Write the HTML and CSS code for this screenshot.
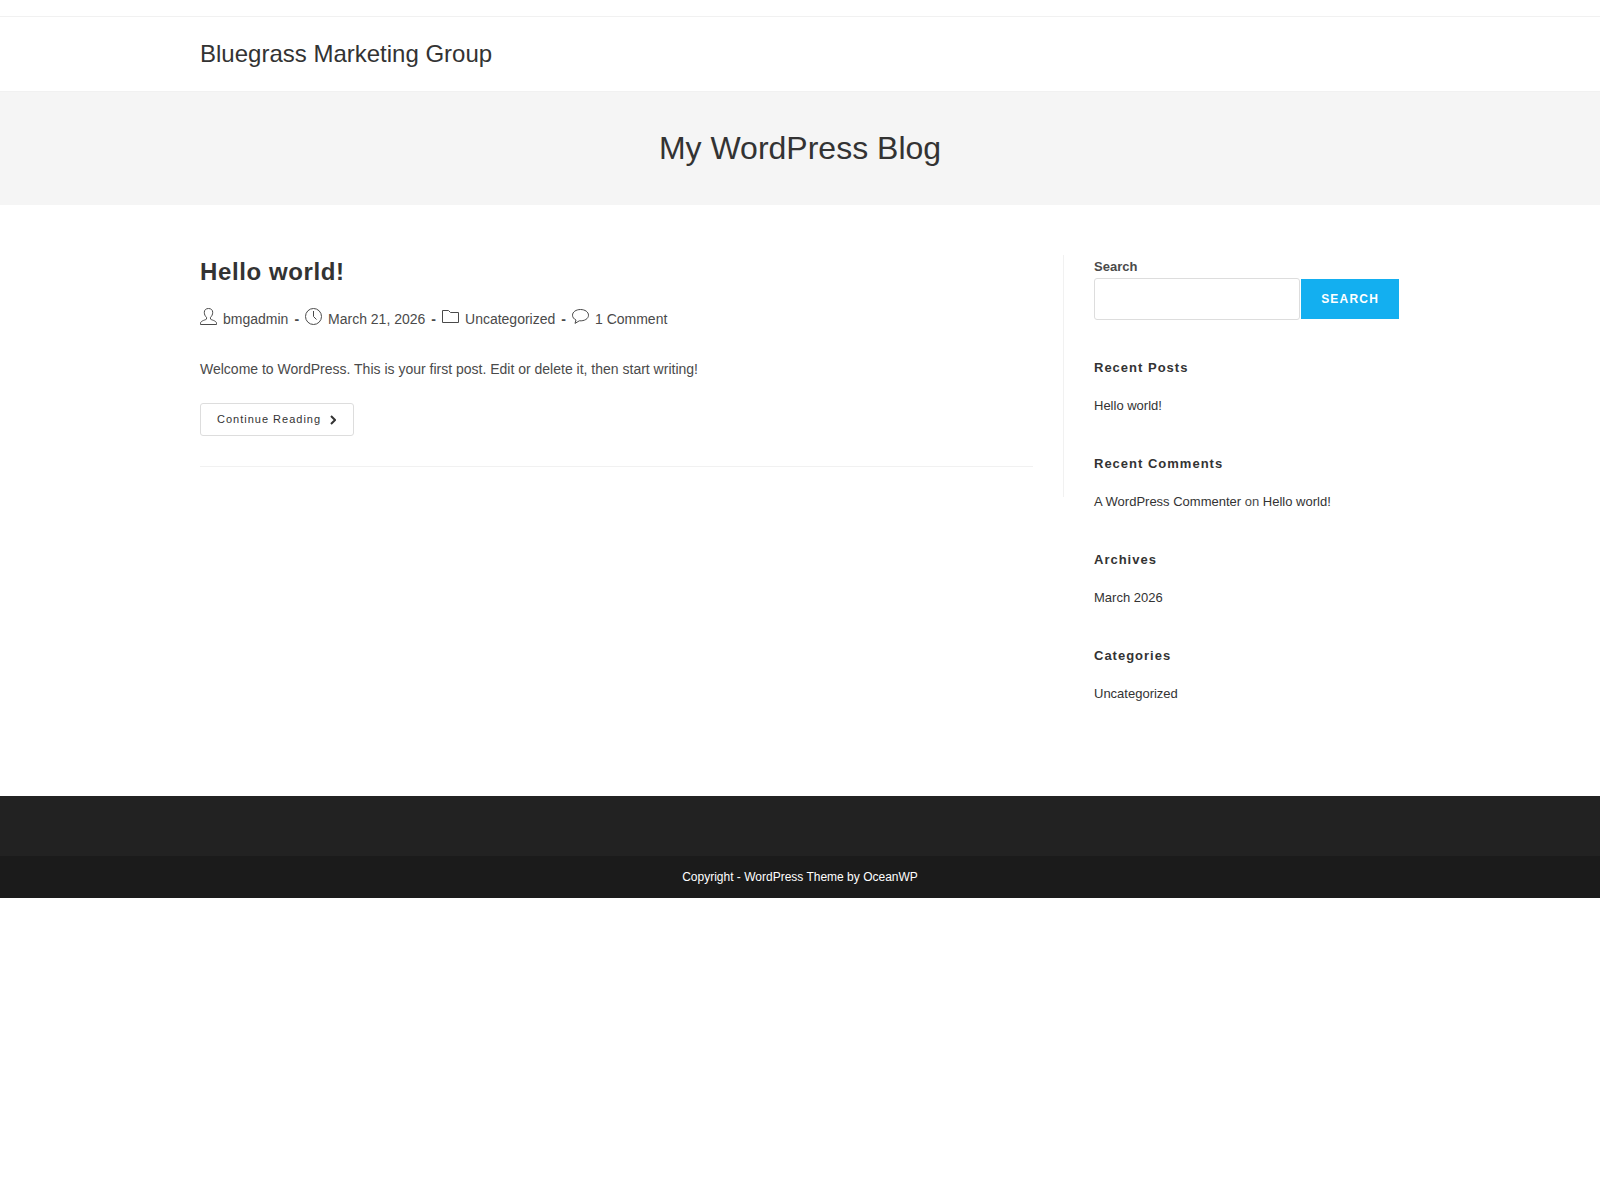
FILE: index.html
```html
<!DOCTYPE html>
<html lang="en-US">
<head>
  <meta charset="UTF-8">
  <meta name="viewport" content="width=device-width, initial-scale=1">
  <title>Bluegrass Marketing Group - My WordPress Blog</title>
  <link rel="stylesheet" href="styles.css">
</head>
<body>
  <div id="top-bar"></div>

  <header id="site-header">
    <div class="container">
      <a class="site-title" href="#">Bluegrass Marketing Group</a>
    </div>
  </header>

  <div class="page-header">
    <h1 class="page-header-title">My WordPress Blog</h1>
  </div>

  <div id="content-wrap" class="container">
    <main id="primary">
      <article class="blog-entry">
        <h2 class="blog-entry-title"><a href="#">Hello world!</a></h2>

        <ul class="meta">
          <li>
            <svg class="icon" viewBox="0 0 17 17"><path d="M8.500 0.500C5.900 0.500 4.300 2 4.300 4.300C4.300 6.500 5.200 8.200 6.500 9.300V11C6.500 11.900 0.500 12.500 0.500 15.200V16.500H16.500V15.200C16.500 12.500 10.500 11.900 10.500 11V9.300C11.800 8.200 12.700 6.500 12.700 4.300C12.700 2 11.100 0.500 8.500 0.500Z"/></svg>
            <a href="#">bmgadmin</a>
          </li>
          <li>
            <svg class="icon" viewBox="0 0 17 17"><circle cx="8.500" cy="8.500" r="8"/><path d="M8.500 3V8.500L11.500 11.500"/></svg>
            March 21, 2026
          </li>
          <li>
            <svg class="icon" viewBox="0 0 17 17"><path d="M0.500 2.500H6.500L8.500 4.500H16.500V14.500H0.500Z"/></svg>
            <a href="#">Uncategorized</a>
          </li>
          <li>
            <svg class="icon" viewBox="0 0 17 17"><path d="M8.500 1.500C4 1.500 0.500 4 0.500 7.200C0.500 9.300 1.900 11 4 12L3 15.400L7.300 12.800C12.500 13.200 16.500 10.700 16.500 7.200C16.500 4 13 1.500 8.500 1.500Z"/></svg>
            <a href="#">1 Comment</a>
          </li>
        </ul>

        <p class="blog-entry-summary">Welcome to WordPress. This is your first post. Edit or delete it, then start writing!</p>

        <a class="readmore" href="#">Continue Reading
          <svg class="arrow" viewBox="0 0 6 10"><path d="M1 1L5 5L1 9"/></svg>
        </a>
      </article>
    </main>

    <aside id="sidebar">
      <form class="widget search-form">
        <label for="search-input">Search</label>
        <div class="search-inside">
          <input type="search" id="search-input">
          <button type="button">SEARCH</button>
        </div>
      </form>

      <section class="widget">
        <h4 class="widget-title">Recent Posts</h4>
        <ul>
          <li><a href="#">Hello world!</a></li>
        </ul>
      </section>

      <section class="widget">
        <h4 class="widget-title">Recent Comments</h4>
        <ul>
          <li><a href="#">A WordPress Commenter</a> on <a href="#">Hello world!</a></li>
        </ul>
      </section>

      <section class="widget">
        <h4 class="widget-title">Archives</h4>
        <ul>
          <li><a href="#">March 2026</a></li>
        </ul>
      </section>

      <section class="widget">
        <h4 class="widget-title">Categories</h4>
        <ul>
          <li><a href="#">Uncategorized</a></li>
        </ul>
      </section>
    </aside>
  </div>

  <footer id="footer">
    <div class="footer-widgets"></div>
    <div class="footer-bottom">Copyright - WordPress Theme by OceanWP</div>
  </footer>
</body>
</html>
```
FILE: styles.css
```css
* {
  box-sizing: border-box;
}
body {
  margin: 0;
  font-family: Arial, "Liberation Sans", sans-serif;
  font-size: 14px;
  line-height: 25px;
  color: #4a4a4a;
  background: #fff;
}
h1, h2, h4, p, ul {
  margin: 0;
  padding: 0;
}
ul {
  list-style: none;
}
a {
  color: #333;
  text-decoration: none;
}
a:hover {
  color: #13aff0;
}
.container {
  width: 1200px;
  max-width: 90%;
  margin: 0 auto;
}

/* Header */
#top-bar {
  padding: 8px 0;
  border-bottom: 1px solid #f1f1f1;
}
#site-header {
  border-bottom: 1px solid #f1f1f1;
}
.site-title {
  display: block;
  font-size: 24px;
  line-height: 74px;
}
.page-header {
  padding: 34px 0;
  background: #f5f5f5;
  text-align: center;
}
.page-header-title {
  font-size: 32px;
  font-weight: 400;
  line-height: 45px;
  color: #333;
}

/* Content */
#content-wrap {
  display: flex;
  align-items: flex-start;
  padding: 50px 0 53px;
}
#primary {
  width: 72%;
  padding: 0 30px 30px 0;
  border-right: 1px solid #f1f1f1;
}
#sidebar {
  width: 28%;
  padding: 0 1px 0 30px;
}
.blog-entry {
  padding-bottom: 30px;
  border-bottom: 1px solid #f1f1f1;
}
.blog-entry-title {
  font-size: 24px;
  line-height: 34px;
  letter-spacing: 0.025em;
}
.meta {
  display: flex;
  flex-wrap: wrap;
  margin: 18px 0 25px;
}
.meta li {
  display: flex;
  align-items: center;
  gap: 6px;
}
.meta li:not(:last-child)::after {
  content: "-";
  margin-right: 6px;
  font-weight: 700;
}
.meta a {
  color: inherit;
}
.icon {
  width: 17px;
  height: 17px;
  margin-bottom: 6px;
  fill: none;
  stroke: #4a4a4a;
}
.blog-entry-summary {
  margin-bottom: 21px;
}
.readmore {
  display: inline-flex;
  align-items: center;
  gap: 9px;
  padding: 0 17px 0 16px;
  border: 1px solid #ddd;
  border-radius: 3px;
  font-size: 11px;
  line-height: 31px;
  letter-spacing: 1px;
}
.arrow {
  width: 6px;
  height: 10px;
  fill: none;
  stroke: #333;
  stroke-width: 2;
}

/* Sidebar */
.widget {
  margin-bottom: 38px;
  font-size: 13px;
  line-height: 22px;
}
.widget-title {
  margin-bottom: 18px;
  font-size: 13px;
  line-height: 18px;
  letter-spacing: 1px;
  color: #333;
}
.search-form {
  margin-bottom: 39px;
}
.search-form label {
  display: block;
  font-weight: 700;
  line-height: 23px;
}
.search-inside {
  display: flex;
  align-items: center;
  gap: 1px;
}
.search-inside input {
  flex: 1;
  min-width: 0;
  height: 42px;
  padding: 6px 12px;
  border: 1px solid #ddd;
  border-radius: 3px;
  font: inherit;
  background: transparent;
}
.search-inside button {
  height: 40px;
  padding: 0 20px;
  border: 0;
  font-family: inherit;
  font-size: 12px;
  font-weight: 700;
  letter-spacing: 0.1em;
  color: #fff;
  background: #13aff0;
  cursor: pointer;
}

/* Footer */
.footer-widgets {
  padding: 30px 0;
  background: #222;
}
.footer-bottom {
  padding: 15px 0;
  font-size: 12px;
  line-height: 12px;
  text-align: center;
  color: #fff;
  background: #1b1b1b;
}
```
